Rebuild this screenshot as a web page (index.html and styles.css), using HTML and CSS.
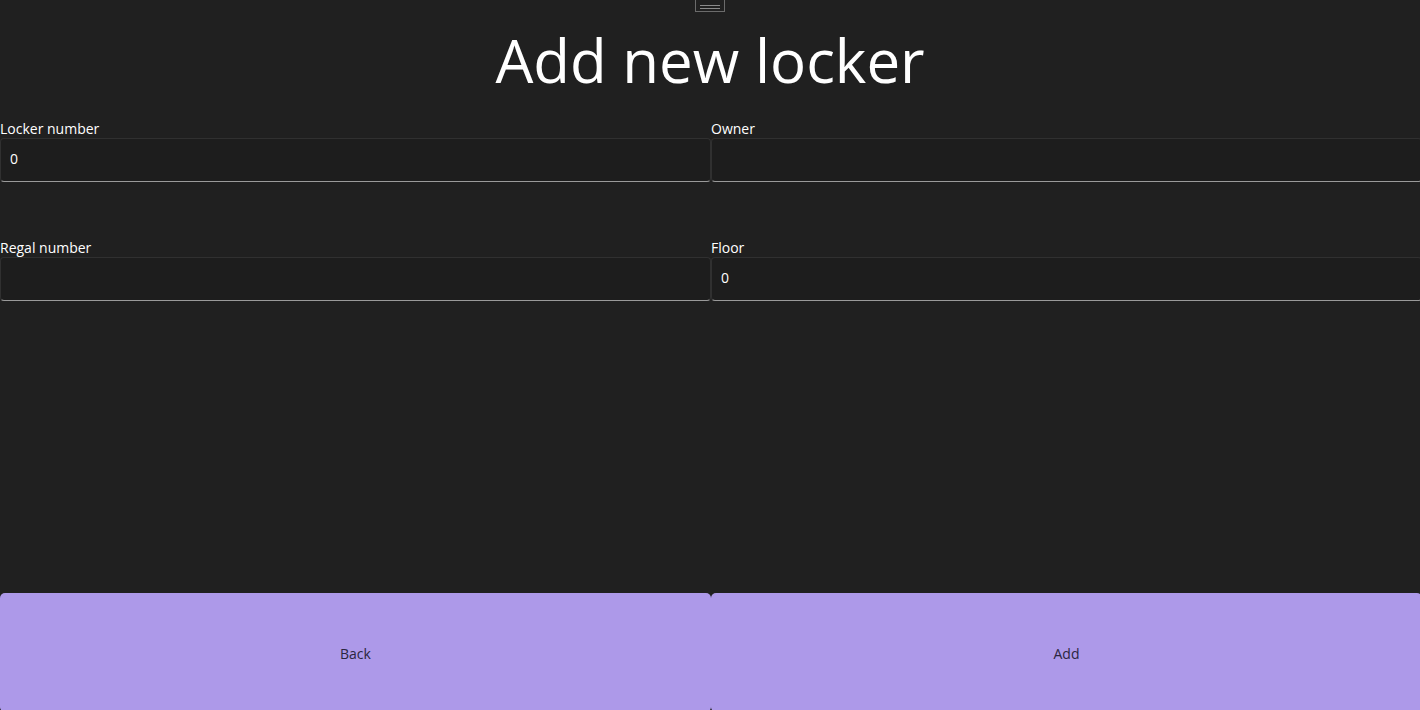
FILE: index.html
```html
<!DOCTYPE html>
<html>
<head>
<meta charset="utf-8">
<link rel="stylesheet" href="styles.css">
</head>
<body>
<div class="page">
  <div class="handle"><span></span><span></span></div>
  <h1 class="title">Add new locker</h1>
  <div class="form">
    <div class="field">
      <label class="label">Locker number</label>
      <div class="input">0</div>
    </div>
    <div class="field">
      <label class="label">Owner</label>
      <div class="input"></div>
    </div>
    <div class="field">
      <label class="label">Regal number</label>
      <div class="input"></div>
    </div>
    <div class="field">
      <label class="label">Floor</label>
      <div class="input">0</div>
    </div>
  </div>
  <div class="spacer"></div>
  <div class="actions">
    <button class="btn">Back</button>
    <button class="btn">Add</button>
  </div>
</div>
</body>
</html>
```
FILE: styles.css
```css
html, body {
  margin: 0;
  padding: 0;
  background: #202020;
  height: 100%;
  overflow: hidden;
}
body {
  font-family: "Open Sans", "Noto Sans", sans-serif;
  color: #ffffff;
}
.page {
  display: flex;
  flex-direction: column;
  height: 712px;
}
.handle {
  align-self: center;
  width: 30px;
  height: 15px;
  margin-top: -3px;
  border: 1px solid #6b6b6b;
  display: flex;
  flex-direction: column;
  justify-content: center;
  align-items: center;
  gap: 2px;
  box-sizing: border-box;
  padding-top: 4px;
}
.handle span {
  display: block;
  width: 20px;
  height: 1px;
  background: #8a8a8a;
}
.title {
  margin: 0;
  text-align: center;
  font-weight: 400;
  font-size: 60px;
  line-height: 94px;
  margin-top: 1px;
  height: 94px;
}
.form {
  display: grid;
  grid-template-columns: 711px 711px;
  column-gap: 0;
  row-gap: 56px;
  margin-top: 12px;
}
.field {
  display: flex;
  flex-direction: column;
}
.label {
  font-size: 14px;
  line-height: 19px;
  height: 19px;
}
.input {
  height: 44px;
  box-sizing: border-box;
  border: 1px solid #303030;
  border-bottom: 1px solid #9a9a9a;
  border-radius: 4px;
  background: #1d1d1d;
  padding: 0 9px;
  font-size: 14px;
  line-height: 39px;
  color: #ffffff;
}
.spacer {
  flex: 1;
}
.actions {
  display: grid;
  grid-template-columns: 711px 711px;
  column-gap: 0;
  height: 119px;
  flex: none;
}
.btn {
  background: #ad99e9;
  border: none;
  border-radius: 5px;
  font-family: "Open Sans", "Noto Sans", sans-serif;
  font-size: 14px;
  color: #2b2640;
  padding: 2px 0 0;
  margin: 0;
}
```
